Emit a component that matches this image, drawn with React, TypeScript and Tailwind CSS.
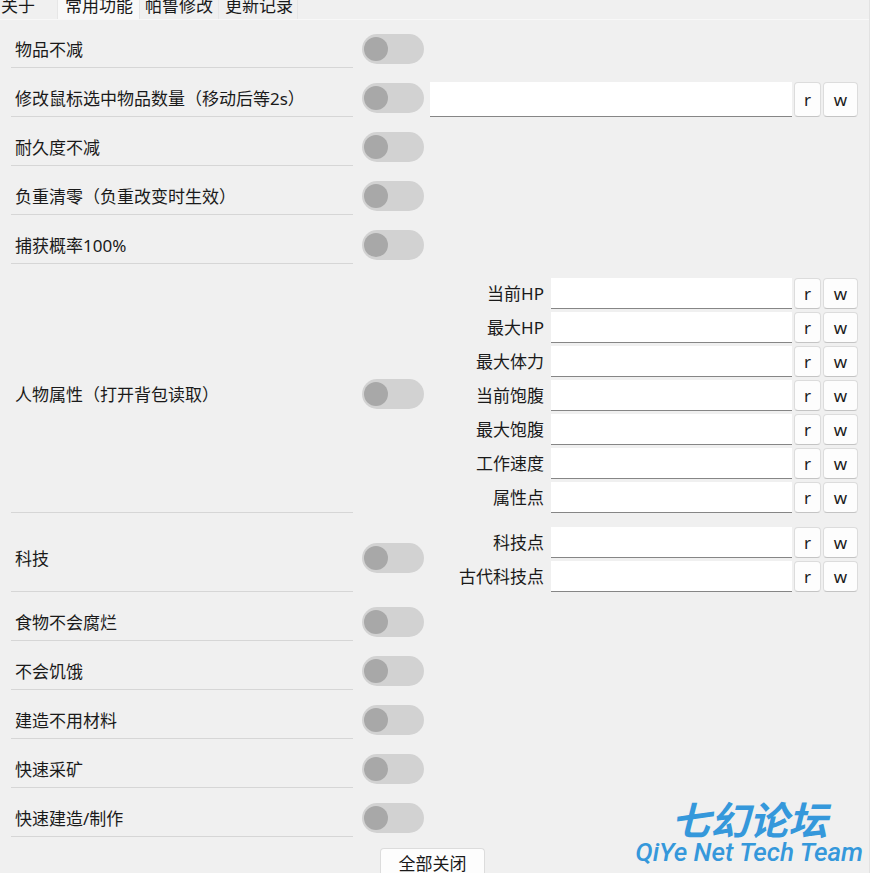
import { useState } from 'react';

interface Option {
  id: string;
  label: string;
  fields?: string[];
  inline?: boolean;
}

const TABS = [
  { label: '关于', className: 'w-[58px] pl-px' },
  { label: '常用功能', className: 'w-[82px] pl-[7px]' },
  { label: '帕鲁修改', className: 'w-[79px] pl-[5px]' },
  { label: '更新记录', className: 'w-[79px] pl-[6px]' },
];

const OPTIONS: Option[] = [
  { id: 'items', label: '物品不减' },
  { id: 'amount', label: '修改鼠标选中物品数量（移动后等2s）', inline: true },
  { id: 'durability', label: '耐久度不减' },
  { id: 'weight', label: '负重清零（负重改变时生效）' },
  { id: 'capture', label: '捕获概率100%' },
  {
    id: 'player',
    label: '人物属性（打开背包读取）',
    fields: ['当前HP', '最大HP', '最大体力', '当前饱腹', '最大饱腹', '工作速度', '属性点'],
  },
  { id: 'tech', label: '科技', fields: ['科技点', '古代科技点'] },
  { id: 'food', label: '食物不会腐烂' },
  { id: 'hunger', label: '不会饥饿' },
  { id: 'build', label: '建造不用材料' },
  { id: 'mining', label: '快速采矿' },
  { id: 'craft', label: '快速建造/制作' },
];

const buttonClass =
  'rounded-[4px] border border-[#dcdcdc] border-b-[#c4c4c4] bg-[#fdfdfd] text-center hover:bg-[#f5f5f5]';

const inputClass = 'min-w-0 self-stretch border-b border-[#868686] bg-white px-2 outline-none';

function ReadWrite() {
  return (
    <>
      <button type="button" className={`w-[27px] self-stretch ${buttonClass}`}>
        r
      </button>
      <button type="button" className={`w-[35px] self-stretch ${buttonClass}`}>
        w
      </button>
    </>
  );
}

function OptionRow({ option }: { option: Option }) {
  return (
    <div className="flex min-h-[35px]">
      <label
        htmlFor={option.id}
        className="flex w-[342px] flex-shrink-0 items-center border-b border-[#d6d6d6] pl-1"
      >
        {option.label}
      </label>

      <div className="ml-[9px] flex flex-shrink-0 items-center pb-1">
        <input
          id={option.id}
          type="checkbox"
          className="h-[30px] w-[62px] appearance-none rounded-full bg-[#d2d2d2] py-[3px] pl-[2px] before:block before:size-6 before:rounded-full before:bg-[#a8a8a8] before:content-[''] checked:bg-[#3a98dc] checked:before:ml-8 checked:before:bg-white"
        />
      </div>

      {option.inline && (
        <div className="ml-[6px] flex min-w-0 flex-1 gap-[2px]">
          <input type="text" aria-label={option.label} className={`flex-1 ${inputClass}`} />
          <ReadWrite />
        </div>
      )}

      {option.fields && (
        <div className="ml-[6px] flex min-w-0 flex-1 flex-col gap-[3px]">
          {option.fields.map((field, i) => (
            <div key={field} className="flex h-[31px] items-center gap-[2px]">
              <label htmlFor={`${option.id}-${i}`} className="flex-1 pr-[5px] text-right">
                {field}
              </label>
              <input id={`${option.id}-${i}`} type="text" className={`w-[241px] ${inputClass}`} />
              <ReadWrite />
            </div>
          ))}
        </div>
      )}
    </div>
  );
}

export default function App() {
  const [active, setActive] = useState('常用功能');

  return (
    <div className="relative h-screen overflow-hidden border-r border-[#e2e2e2] bg-[#f0f0f0] font-['Noto_Sans','Noto_Sans_CJK_SC',sans-serif] text-[17px] leading-6 text-[#1a1a1a]">
      {/* Tabs, scrolled half out of view */}
      <nav className="flex h-5 items-end overflow-hidden border-b border-[#f8f8f8]">
        {TABS.map((tab) => (
          <button
            key={tab.label}
            type="button"
            onClick={() => setActive(tab.label)}
            className={`flex h-8 flex-shrink-0 items-end border-r border-[#e6e6e6] pb-px ${tab.className} ${
              active === tab.label ? 'bg-[#f9f9f9]' : ''
            }`}
          >
            {tab.label}
          </button>
        ))}
      </nav>

      <form className="px-[11px] pt-[13px]">
        <div className="flex flex-col gap-[14px]">
          {OPTIONS.map((option) => (
            <OptionRow key={option.id} option={option} />
          ))}
        </div>
        <div className="mt-[11px] flex justify-center pr-1">
          <button type="button" className={`h-8 w-[105px] ${buttonClass}`}>
            全部关闭
          </button>
        </div>
      </form>

      {/* Forum watermark */}
      <div className="pointer-events-none absolute bottom-[9px] right-[6px] text-[#3598db]">
        <p className="pl-9 text-[39px] font-bold italic leading-10">七幻论坛</p>
        <p className="font-['Roboto',sans-serif] text-[26px] font-medium italic leading-6">QiYe Net Tech Team</p>
      </div>
    </div>
  );
}
